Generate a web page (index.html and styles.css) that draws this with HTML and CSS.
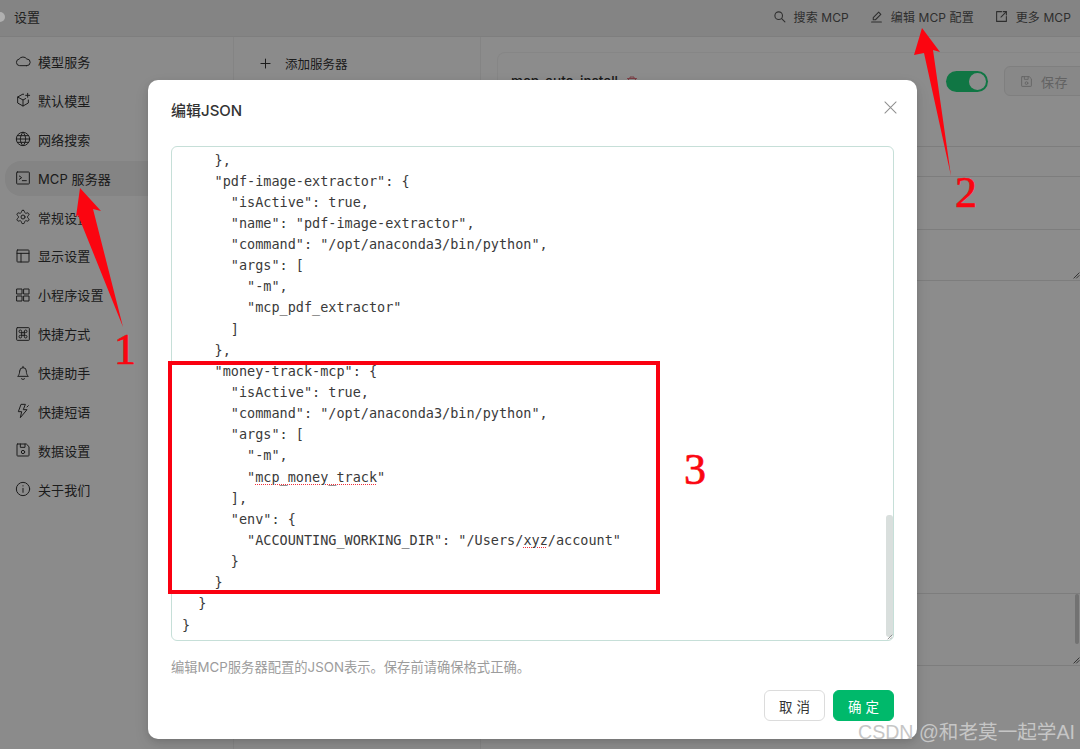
FILE: index.html
```html
<!DOCTYPE html>
<html lang="zh-CN">
<head>
<meta charset="utf-8">
<title>设置</title>
<link rel="stylesheet" href="styles.css">
</head>
<body>
<div class="app">
  <header class="topbar">
    <div class="title">设置</div>
    <nav class="actions">
      <span class="action"><svg class="ico-sm" viewBox="0 0 24 24"><circle cx="10.5" cy="10.5" r="7"/><path d="M16 16l6 6"/></svg>搜索 MCP</span>
      <span class="action"><svg class="ico-sm" viewBox="0 0 24 24"><path d="M3 22h18"/><path d="M6 18v-4L16 4l4 4-10 10z"/></svg>编辑 MCP 配置</span>
      <span class="action"><svg class="ico-sm" viewBox="0 0 24 24"><path d="M12 3H3v18h18v-9"/><path d="M11 13L21 3"/><path d="M15 3h6v6"/></svg>更多 MCP</span>
    </nav>
  </header>
  <div class="body">
    <aside class="sidebar">
      <div class="item"><svg class="ico" viewBox="0 0 24 24"><path d="M17.5 19H7a5 5 0 0 1-.8-9.9A7 7 0 0 1 17.7 9h.3a5 5 0 0 1-.5 10z"/></svg>模型服务</div>
      <div class="item"><svg class="ico" viewBox="0 0 24 24"><path d="M13 3.5L12 3 4 7.500v9L12 21l8-4.500V12"/><path d="M4 7.500l8 4.500 4-2.200"/><path d="M12 12v9"/><path d="M19 2v6M16 5h6"/></svg>默认模型</div>
      <div class="item"><svg class="ico" viewBox="0 0 24 24"><circle cx="12" cy="12" r="10"/><path d="M2 12h20M3.500 7h17M3.500 17h17"/><path d="M12 2c5.300 5.500 5.300 14.500 0 20c-5.300-5.500-5.300-14.500 0-20z"/></svg>网络搜索</div>
      <div class="item active"><svg class="ico" viewBox="0 0 24 24"><rect x="2.500" y="3" width="19" height="18" rx="1"/><path d="M6.500 9l3.500 2.500L6.500 14"/><path d="M11 16h6"/></svg>MCP 服务器</div>
      <div class="item"><svg class="ico" viewBox="0 0 24 24"><path d="M12.220 2h-.44a2 2 0 0 0-2 2v.18a2 2 0 0 1-1 1.730l-.43.25a2 2 0 0 1-2 0l-.15-.08a2 2 0 0 0-2.730.73l-.22.38a2 2 0 0 0 .73 2.730l.15.1a2 2 0 0 1 1 1.720v.51a2 2 0 0 1-1 1.740l-.15.09a2 2 0 0 0-.73 2.730l.22.38a2 2 0 0 0 2.730.73l.15-.08a2 2 0 0 1 2 0l.43.25a2 2 0 0 1 1 1.730V20a2 2 0 0 0 2 2h.44a2 2 0 0 0 2-2v-.18a2 2 0 0 1 1-1.730l.43-.25a2 2 0 0 1 2 0l.15.08a2 2 0 0 0 2.730-.73l.22-.39a2 2 0 0 0-.73-2.730l-.15-.08a2 2 0 0 1-1-1.740v-.5a2 2 0 0 1 1-1.740l.15-.09a2 2 0 0 0 .73-2.730l-.22-.38a2 2 0 0 0-2.730-.73l-.15.08a2 2 0 0 1-2 0l-.43-.25a2 2 0 0 1-1-1.730V4a2 2 0 0 0-2-2z"/><circle cx="12" cy="12" r="3"/></svg>常规设置</div>
      <div class="item"><svg class="ico" viewBox="0 0 24 24"><rect x="3" y="3" width="18" height="18" rx="1"/><path d="M3 8h18M9 8v13"/></svg>显示设置</div>
      <div class="item"><svg class="ico" viewBox="0 0 24 24"><rect x="3" y="3" width="7.500" height="7.500"/><rect x="13.500" y="3" width="7.500" height="7.500"/><rect x="3" y="13.500" width="7.500" height="7.500"/><rect x="13.500" y="13.500" width="7.500" height="7.500"/></svg>小程序设置</div>
      <div class="item"><svg class="ico" viewBox="0 0 24 24"><rect x="2.500" y="2.500" width="19" height="19" rx="1"/><path d="M14 8v8a2 2 0 1 0 2-2H8a2 2 0 1 0 2 2V8a2 2 0 1 0-2 2h8a2 2 0 1 0-2-2"/></svg>快捷方式</div>
      <div class="item"><svg class="ico" viewBox="0 0 24 24"><path d="M7 9a5 5 0 0 1 10 0c0 6 3 8 3 8H4s3-2 3-8"/><path d="M12 2v2"/><path d="M9.500 20.500a3 3 0 0 0 5 0"/></svg>快捷助手</div>
      <div class="item"><svg class="ico" viewBox="0 0 24 24"><path d="M15 2H9L5 13h5l-2 9 10-12h-5z"/><path d="M20 4l-2 2"/></svg>快捷短语</div>
      <div class="item"><svg class="ico" viewBox="0 0 24 24"><path d="M4 3h13l4 4v13a1 1 0 0 1-1 1H4a1 1 0 0 1-1-1V4a1 1 0 0 1 1-1z"/><path d="M8 3v5h7V3"/><circle cx="12" cy="15" r="2.500"/></svg>数据设置</div>
      <div class="item"><svg class="ico" viewBox="0 0 24 24"><circle cx="12" cy="12" r="10"/><path d="M12 11v6M12 7v.5"/></svg>关于我们</div>
    </aside>
    <section class="servers">
      <div class="add"><svg class="ico-plus" viewBox="0 0 12 12"><path d="M6 1v10M1 6h10"/></svg>添加服务器</div>
    </section>
    <main class="content">
      <div class="card">
        <div class="card-head">
          <div class="card-title">mcp-auto-install <svg class="trash" viewBox="0 0 24 24"><path d="M3 6h18M8 6V3h8v3M5 6l1 15h12l1-15"/></svg></div>
          <div class="card-tools">
            <span class="toggle"><span class="knob"></span></span>
            <span class="save"><svg class="ico-save" viewBox="0 0 24 24"><path d="M4 3h13l4 4v13a1 1 0 0 1-1 1H4a1 1 0 0 1-1-1V4a1 1 0 0 1 1-1z"/><path d="M8 3v5h7V3"/><circle cx="12" cy="15" r="2.500"/></svg>保存</span>
          </div>
        </div>
        <div class="field f1"></div>
        <div class="field f2"><svg class="field-grip" viewBox="0 0 8 8"><path d="M1 7l6-6M4 7l3-3"/></svg></div>
        <div class="field f3"></div>
        <div class="field f4"><span class="field-thumb"></span><svg class="field-grip" viewBox="0 0 8 8"><path d="M1 7l6-6M4 7l3-3"/></svg></div>
        <div class="field f5"></div>
      </div>
    </main>
  </div>
</div>

<div class="overlay"></div>
<span class="dot"></span>

<div class="modal">
  <h2 class="modal-title">编辑JSON</h2>
  <svg class="close" viewBox="0 0 14 14"><path d="M1 1l12 12M13 1L1 13"/></svg>
  <div class="editor">
<pre class="code">    },
    "pdf-image-extractor": {
      "isActive": true,
      "name": "pdf-image-extractor",
      "command": "/opt/anaconda3/bin/python",
      "args": [
        "-m",
        "mcp_pdf_extractor"
      ]
    },
    "money-track-mcp": {
      "isActive": true,
      "command": "/opt/anaconda3/bin/python",
      "args": [
        "-m",
        "<span class="typo">mcp_money_track</span>"
      ],
      "env": {
        "ACCOUNTING_WORKING_DIR": "/Users/<span class="typo">xyz</span>/account"
      }
    }
  }
}</pre>
    <span class="thumb"></span>
    <svg class="grip" viewBox="0 0 6 6"><path d="M1 5l4-4M3.500 5L5 3.500"/></svg>
  </div>
  <p class="hint">编辑MCP服务器配置的JSON表示。保存前请确保格式正确。</p>
  <div class="footer">
    <button class="btn">取 消</button>
    <button class="btn primary">确 定</button>
  </div>
</div>

<div class="redbox"></div>
<svg class="arrows" viewBox="0 0 1080 749">
  <polygon points="80,188 101,211 93,209 123,327 78,215 76,217"/>
  <polygon points="922,28 940,52 933,50 951,176 924,53 914,55"/>
</svg>
<span class="num n1">1</span>
<span class="num n2">2</span>
<span class="num n3">3</span>
<span class="watermark">CSDN @和老莫一起学AI</span>
</body>
</html>
```
FILE: styles.css
```css
* { box-sizing: border-box; }
html, body { margin: 0; height: 100%; }
body {
  width: 1080px;
  height: 749px;
  overflow: hidden;
  position: relative;
  font-family: Inter, "Noto Sans CJK SC", sans-serif;
  color: #4a4a4a;
  background: #fff;
}
svg { fill: none; stroke: currentColor; stroke-linecap: round; stroke-linejoin: round; flex: none; }

.app { display: flex; flex-direction: column; height: 749px; }

.topbar {
  height: 37px;
  flex: none;
  display: flex;
  align-items: center;
  justify-content: space-between;
  padding: 0 9px 4px 14px;
  background: #f1f1f1;
  border-bottom: 1px solid #e6e6e6;
}
.title { font-size: 13px; color: #3c3c3c; }
.actions { display: flex; gap: 21px; }
.action { display: flex; align-items: center; gap: 8px; font-size: 12px; letter-spacing: .1px; color: #555; }
.ico-sm { width: 13px; height: 13px; stroke-width: 2; }

.body { flex: 1; display: flex; min-height: 0; }
.sidebar {
  width: 233px;
  flex: none;
  padding: 7px 5px 0;
  display: flex;
  flex-direction: column;
  gap: 4px;
  background: #fefefe;
}
.item {
  height: 34.900px;
  flex: none;
  display: flex;
  align-items: center;
  gap: 7px;
  padding-left: 10px;
  border-radius: 16px;
  font-size: 13px;
  letter-spacing: .1px;
  color: #333;
}
.item.active { background: #f0f0f0; }
.ico { width: 16px; height: 16px; stroke-width: 1.500; }

.servers {
  width: 248px;
  flex: none;
  padding: 8px 12px;
  background: #fefefe;
  border-left: 1px solid #f0f0f0;
  border-right: 1px solid #f0f0f0;
}
.add { height: 36px; display: flex; align-items: center; gap: 14px; padding-left: 14px; font-size: 12.500px; color: #333; }
.ico-plus { width: 11px; height: 11px; stroke-width: 1.100; }

.content { flex: 1; min-width: 0; padding: 15px 0 0 16px; overflow: hidden; background: #fff; }
.card { width: 620px; border: 1px solid #f4f4f4; border-bottom: 0; border-radius: 8px 0 0 0; }
.card-head {
  height: 94px;
  display: flex;
  justify-content: space-between;
  padding: 13px 0 0 13px;
  border-bottom: 1px solid #e4e4e4;
}
.card-title { font-size: 13.500px; height: 30px; display: flex; align-items: center; gap: 8px; font-weight: 500; color: #333; }
.trash { width: 12px; height: 13px; color: #e0707c; stroke-width: 2; }
.card-tools { display: flex; align-items: flex-start; gap: 16px; width: 170px; }
.toggle {
  width: 42px;
  height: 21px;
  margin-top: 5px;
  border-radius: 11px;
  background: #1ed77c;
  display: flex;
  justify-content: flex-end;
  padding: 2px;
}
.knob { width: 17px; height: 17px; border-radius: 50%; background: #fff; }
.save {
  width: 90px;
  height: 30px;
  display: flex;
  align-items: center;
  gap: 8px;
  padding-left: 15px;
  border: 1px solid #e8e8e8;
  border-radius: 6px;
  background: #f7f7f7;
  font-size: 13px;
  letter-spacing: .5px;
  color: #b4b4b4;
}
.ico-save { width: 13px; height: 13px; stroke-width: 1.600; }

.field { position: relative; border-top: 1px solid #e4e4e4; }
.f1 { margin-top: 29px; height: 53px; }
.f2 { height: 51px; }
.f3 { height: 313px; }
.f4 { height: 72px; }
.f5 { height: 53px; }
.field-thumb { position: absolute; right: 37px; top: 0; width: 4px; height: 50px; border-radius: 2px; background: #cfcfcf; }
.field-grip { position: absolute; right: 36px; bottom: 1px; width: 7px; height: 7px; color: #333; stroke-width: .9; }

.overlay { position: absolute; inset: 0; background: rgba(0, 0, 0, .45); }
.dot { position: absolute; left: -5px; top: 12px; width: 10px; height: 10px; border-radius: 50%; background: #b0b0b0; }

.modal {
  position: absolute;
  left: 148px;
  top: 80px;
  width: 769px;
  height: 659px;
  padding: 0 23px;
  background: #fff;
  border-radius: 10px;
  box-shadow: 0 6px 16px rgba(0, 0, 0, .08), 0 3px 6px rgba(0, 0, 0, .1);
}
.modal-title { margin: 0; height: 66px; padding-top: 21px; font-size: 15px; line-height: 20px; font-weight: 500; color: #333; }
.close { position: absolute; right: 20px; top: 21px; width: 13px; height: 13px; color: #8e8e8e; stroke-width: 1.100; }

.editor {
  position: relative;
  height: 495px;
  overflow: hidden;
  border: 1px solid #c6dfd8;
  border-radius: 6px;
  padding: 2.500px 10px;
}
.code {
  margin: 0;
  font-family: "DejaVu Sans Mono", monospace;
  font-size: 13.500px;
  line-height: 21.140px;
  color: #3a3a3a;
}
.typo { text-decoration: underline dotted #ee2f3a 1px; text-underline-offset: 2px; }
.thumb { position: absolute; right: 0; top: 368px; width: 7px; height: 122px; border-radius: 3px; background: #d9dfdd; }
.grip { position: absolute; right: 0; bottom: 0; width: 6px; height: 6px; color: #777; stroke-width: .8; }

.hint { margin: 18px 0 0; font-size: 13.300px; line-height: 17px; color: #9c9c9c; }
.footer { display: flex; justify-content: flex-end; gap: 8px; margin-top: 14px; }
.btn {
  width: 61px;
  height: 31px;
  padding: 0;
  border: 1px solid #dcdcdc;
  border-radius: 6px;
  background: #fff;
  font: 13.500px Inter, "Noto Sans CJK SC", sans-serif;
  color: #333;
}
.btn.primary { border-color: #00b96b; background: #00b96b; color: #fff; }

.redbox { position: absolute; left: 168px; top: 361px; width: 492px; height: 233px; border: 4px solid #fa0010; }
.arrows { position: absolute; left: 0; top: 0; width: 1080px; height: 749px; pointer-events: none; }
.arrows polygon { fill: #fb0510; stroke: none; }
.num { position: absolute; font-family: "Liberation Serif", serif; font-size: 44px; line-height: 44px; color: #fb0510; -webkit-text-stroke: .7px #fb0510; }
.n1 { left: 114px; top: 328px; }
.n2 { left: 955px; top: 171px; }
.n3 { left: 684px; top: 448px; }
.watermark {
  position: absolute;
  left: 858px;
  top: 718px;
  font-family: "Liberation Sans", "Noto Sans CJK SC", sans-serif;
  font-size: 19.600px;
  line-height: 28px;
  white-space: nowrap;
  color: #c6c6c6;
}
```
